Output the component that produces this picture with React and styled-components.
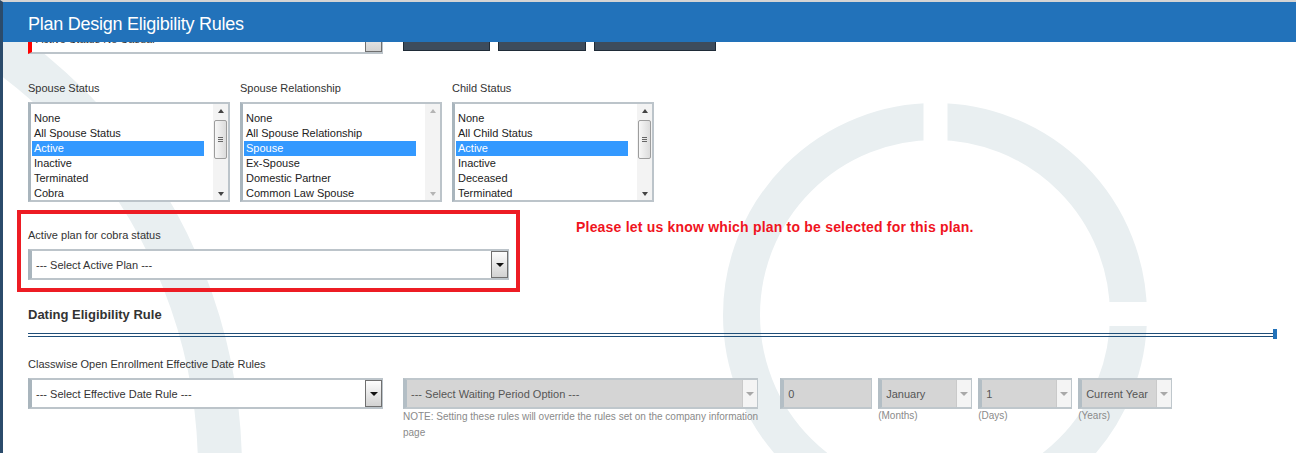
import React from 'react'
import styled, { createGlobalStyle } from 'styled-components'

const GlobalStyle = createGlobalStyle`
  html, body {
    margin: 0;
    padding: 0;
    background: #fff;
  }
  body {
    font-family: "Liberation Sans", Arial, sans-serif;
    font-size: 11px;
    color: #333;
  }
`

const spouseStatus = ['None', 'All Spouse Status', 'Active', 'Inactive', 'Terminated', 'Cobra']
const spouseRelationship = ['None', 'All Spouse Relationship', 'Spouse', 'Ex-Spouse', 'Domestic Partner', 'Common Law Spouse']
const childStatus = ['None', 'All Child Status', 'Active', 'Inactive', 'Deceased', 'Terminated']

const ListField = ({ label, options, selected, thumb }) => (
  <Field>
    <Label>{label}</Label>
    <ListBox>
      <Options>
        {options.map(o => (
          <Option key={o} $selected={o === selected}>{o}</Option>
        ))}
      </Options>
      <Scrollbar>
        <Arrow $up $muted={!thumb} />
        {thumb ? <Thumb><Grip /></Thumb> : null}
        <Spacer />
        <Arrow $muted={!thumb} />
      </Scrollbar>
    </ListBox>
  </Field>
)

const Select = ({ width, text, disabled, invalid, noButton }) => (
  <SelectBox $width={width} $disabled={disabled} $invalid={invalid}>
    <SelectText>{text}</SelectText>
    {!noButton && (
      <DropButton $disabled={disabled}>
        <Caret $disabled={disabled} />
      </DropButton>
    )}
  </SelectBox>
)

const App = () => {
  return (
    <Page>
      <GlobalStyle />
      <Watermark viewBox="0 0 1296 453">
        <circle cx="-295" cy="470" r="515" fill="none" stroke="#e9eff1" strokeWidth="44" />
        <circle cx="935" cy="315" r="193.5" fill="none" stroke="#e9eff1" strokeWidth="37" />
        <rect x="923.5" y="95" width="24" height="50" fill="#fff" />
        <rect x="1100" y="302" width="55" height="24" fill="#fff" />
      </Watermark>

      <Header>
        <Title>Plan Design Eligibility Rules</Title>
      </Header>

      <Content>
        <TopRow>
          <Select width={355} text="Active Status No Casual" invalid />
          <DarkButton $width={87} />
          <DarkButton $width={88} />
          <DarkButton $width={122} />
        </TopRow>

        <ListRow>
          <ListField label="Spouse Status" options={spouseStatus} selected="Active" thumb />
          <ListField label="Spouse Relationship" options={spouseRelationship} selected="Spouse" />
          <ListField label="Child Status" options={childStatus} selected="Active" thumb />
        </ListRow>

        <NoticeRow>
          <Highlight>
            <Label>Active plan for cobra status</Label>
            <Select width={481} text="--- Select Active Plan ---" />
          </Highlight>
          <Message>Please let us know which plan to be selected for this plan.</Message>
        </NoticeRow>

        <SectionTitle>Dating Eligibility Rule</SectionTitle>
        <Rule />

        <Label $spaced>Classwise Open Enrollment Effective Date Rules</Label>
        <DateRow>
          <Select width={355} text="--- Select Effective Date Rule ---" />
          <Field>
            <Select width={355} text="--- Select Waiting Period Option ---" disabled />
            <Note>
              NOTE: Setting these rules will override the rules set on the company information
              <br />
              page
            </Note>
          </Field>
          <SmallFields>
            <Field>
              <Select width={92} text="0" disabled noButton />
            </Field>
            <Field>
              <Select width={94} text="January" disabled />
              <Hint>(Months)</Hint>
            </Field>
            <Field>
              <Select width={94} text="1" disabled />
              <Hint>(Days)</Hint>
            </Field>
            <Field>
              <Select width={94} text="Current Year" disabled />
              <Hint>(Years)</Hint>
            </Field>
          </SmallFields>
        </DateRow>
      </Content>
    </Page>
  )
}

export default App

const Page = styled.div`
  position: relative;
  width: 1296px;
  height: 453px;
  box-sizing: border-box;
  overflow: hidden;
  background: #fff;
  border-top: 2px solid #d4d4d4;
  border-left: 3px solid #2b4b6b;

  &::before {
    content: '';
    position: absolute;
    top: -2px;
    right: 0;
    width: 27px;
    height: 2px;
    background: #2c4a6a;
  }
`

const Watermark = styled.svg`
  position: absolute;
  left: -3px;
  top: -2px;
  width: 1296px;
  height: 453px;
  z-index: 0;
`

const Header = styled.header`
  position: absolute;
  top: 0;
  left: 0;
  right: 0;
  height: 40px;
  z-index: 3;
  display: flex;
  align-items: center;
  padding: 5px 0 0 25px;
  box-sizing: border-box;
  background: #2272ba;
`

const Title = styled.h1`
  margin: 0;
  font-family: "Liberation Sans", Arial, sans-serif;
  font-size: 18px;
  font-weight: normal;
  letter-spacing: -0.25px;
  color: #fff;
`

const Content = styled.div`
  position: relative;
  z-index: 1;
  padding: 21px 20px 0 25px;
`

const TopRow = styled.div`
  display: flex;
  align-items: flex-start;
  gap: 8px;

  & > :first-child {
    margin-right: 12px;
  }
`

const DarkButton = styled.div`
  width: ${p => p.$width}px;
  height: 28px;
  box-sizing: border-box;
  background: #3d4c5d;
  border: 1px solid #1f2b37;
`

const ListRow = styled.div`
  display: flex;
  gap: 10px;
  margin-top: 27px;
`

const Field = styled.div`
  display: flex;
  flex-direction: column;
`

const Label = styled.div`
  line-height: 14px;
  color: #333;
  margin-bottom: 7px;
  margin-top: ${p => (p.$spaced ? '20px' : '0')};
  white-space: nowrap;
`

const ListBox = styled.div`
  display: flex;
  width: 202px;
  height: 100px;
  box-sizing: border-box;
  overflow: hidden;
  background: #fff;
  border: 2px solid #bcc4ca;
  border-left: 3px solid #a9b5bd;
`

const Options = styled.ul`
  flex: 1;
  list-style: none;
  margin: 0;
  padding: 7px 9px 0 1px;
`

const Option = styled.li`
  height: 15px;
  line-height: 15px;
  padding-left: 2px;
  white-space: nowrap;
  color: ${p => (p.$selected ? '#fff' : '#222')};
  background: ${p => (p.$selected ? '#3399ff' : 'transparent')};
`

const Scrollbar = styled.div`
  width: 15px;
  display: flex;
  flex-direction: column;
  align-items: center;
  padding: 5px 0 4px;
  box-sizing: border-box;
  background: #f3f3f3;
`

const Arrow = styled.span`
  width: 0;
  height: 0;
  border-left: 3px solid transparent;
  border-right: 3px solid transparent;
  ${p =>
    p.$up
      ? `border-bottom: 4px solid ${p.$muted ? '#b4b4b4' : '#444'};`
      : `border-top: 4px solid ${p.$muted ? '#b4b4b4' : '#444'};`}
`

const Spacer = styled.span`
  flex: 1;
`

const Thumb = styled.span`
  width: 13px;
  height: 39px;
  margin-top: 7px;
  box-sizing: border-box;
  border: 1px solid #9d9d9d;
  border-radius: 2px;
  background: linear-gradient(to right, #f7f7f7, #dcdcdc);
  display: flex;
  align-items: center;
  justify-content: center;
`

const Grip = styled.span`
  width: 5px;
  height: 1px;
  background: #666;
  box-shadow: 0 -2px 0 #666, 0 2px 0 #666;
`

const SelectBox = styled.div`
  width: ${p => p.$width}px;
  height: 31px;
  box-sizing: border-box;
  display: flex;
  align-items: stretch;
  background: ${p => (p.$disabled ? '#d5d5d5' : '#fff')};
  color: ${p => (p.$disabled ? '#555' : '#333')};
  border: 2px solid ${p => (p.$disabled ? '#bfc7cc' : '#bcc4ca')};
  border-right-width: 1px;
  border-left: 4px solid ${p => (p.$invalid ? '#ff0000' : p.$disabled ? '#b3bec5' : '#a9b5bd')};
`

const SelectText = styled.span`
  flex: 1;
  display: flex;
  align-items: center;
  padding-left: 4px;
  white-space: nowrap;
  overflow: hidden;
`

const DropButton = styled.span`
  width: ${p => (p.$disabled ? '15px' : '17px')};
  box-sizing: border-box;
  display: flex;
  align-items: center;
  justify-content: center;
  ${p =>
    p.$disabled
      ? 'background: #f4f4f4; border-left: 1px solid #cacaca;'
      : 'background: linear-gradient(#fdfdfd, #d2d2d2); border: 1px solid #707070;'}
`

const Caret = styled.span`
  width: 0;
  height: 0;
  border-left: 4px solid transparent;
  border-right: 4px solid transparent;
  border-top: 4px solid ${p => (p.$disabled ? '#a8a8a8' : '#111')};
`

const NoticeRow = styled.div`
  display: flex;
  align-items: flex-start;
  margin-top: 8px;
`

const Highlight = styled.div`
  width: 503px;
  margin-left: -11px;
  box-sizing: border-box;
  border: 4px solid #ed1c24;
  padding: 14px 7px 8px;
`

const Message = styled.div`
  margin: 9px 0 0 56px;
  font-size: 14px;
  font-weight: bold;
  letter-spacing: 0.2px;
  line-height: 16px;
  color: #f0141e;
  white-space: nowrap;
`

const SectionTitle = styled.h2`
  margin: 15px 0 0;
  font-size: 13px;
  font-weight: bold;
  line-height: 16px;
  color: #333;
`

const Rule = styled.div`
  position: relative;
  height: 2px;
  margin-top: 10px;
  border-top: 1px solid #1f4e79;
  border-bottom: 1px solid #1f4e79;

  &::after {
    content: '';
    position: absolute;
    right: -1px;
    top: -5px;
    width: 4px;
    height: 10px;
    background: #2272ba;
  }
`

const DateRow = styled.div`
  display: flex;
  align-items: flex-start;
  gap: 20px;
`

const SmallFields = styled.div`
  display: flex;
  gap: 6px;
  margin-left: 2px;
`

const Note = styled.div`
  font-size: 10px;
  line-height: 16px;
  color: #8a8a8a;
  white-space: nowrap;
`

const Hint = styled.div`
  font-size: 10px;
  line-height: 14px;
  color: #8a8a8a;
`
